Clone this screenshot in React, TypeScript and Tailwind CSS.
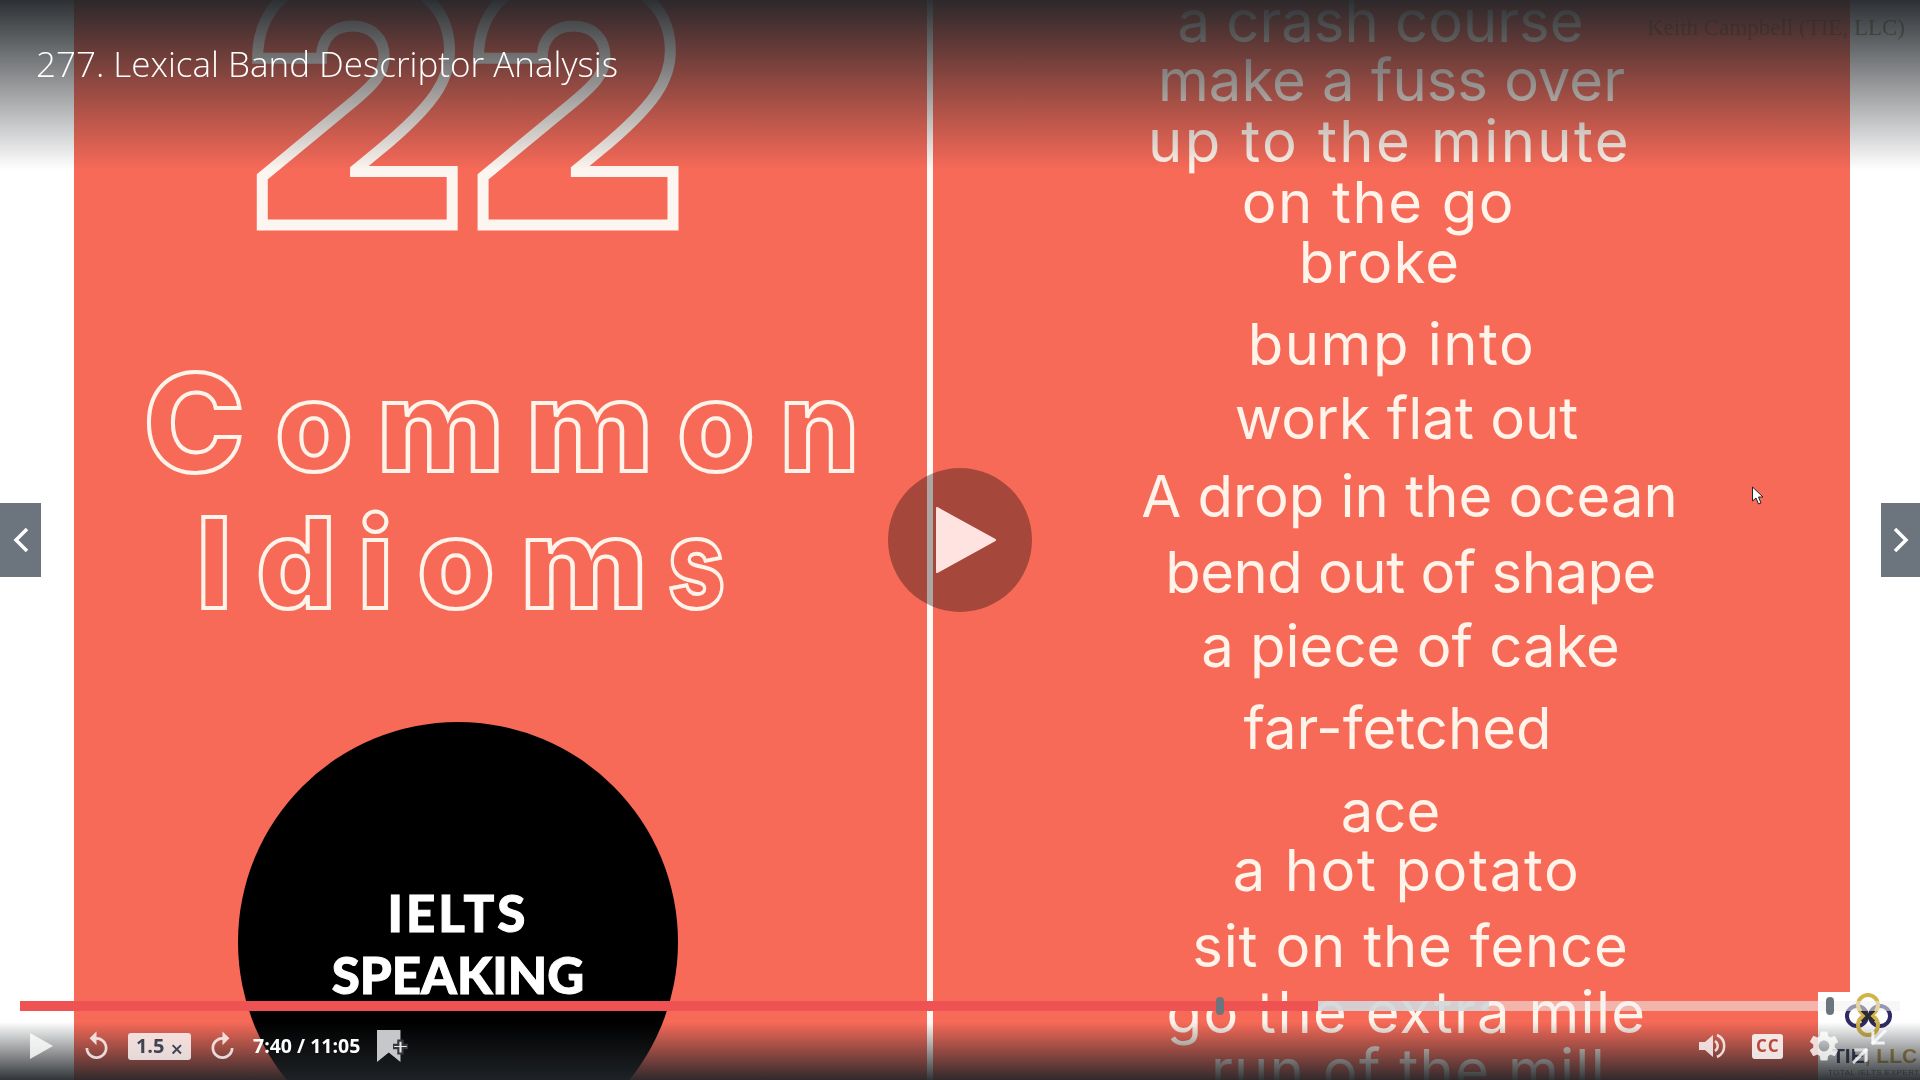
import { Minimize2 } from "lucide-react";
import { MdReplay, MdSettings } from "react-icons/md";

const idioms = [
	{ text: "a crash course", cls: "-mt-[14px] -translate-x-[11px]" },
	{ text: "make a fuss over", cls: "-mt-[11px] translate-x-[0px]" },
	{ text: "up to the minute", cls: "-mt-[9px] -translate-x-[2px] tracking-[2.4px]" },
	{ text: "on the go", cls: "-mt-[9px] -translate-x-[13px] tracking-[1.6px]" },
	{ text: "broke", cls: "-mt-[10px] -translate-x-[12px] tracking-[1.2px]" },
	{ text: "bump into", cls: "mt-[12px] translate-x-[0px] tracking-[1.5px]" },
	{ text: "work flat out", cls: "mt-[4px] translate-x-[15px]" },
	{ text: "A drop in the ocean", cls: "mt-[8px] translate-x-[18px]" },
	{ text: "bend out of shape", cls: "mt-[6px] translate-x-[19px] -tracking-[0.5px]" },
	{ text: "a piece of cake", cls: "mt-[4px] translate-x-[19px]" },
	{ text: "far-fetched", cls: "mt-[12px] translate-x-[6px]" },
	{ text: "ace", cls: "mt-[13px] -translate-x-[1px]" },
	{ text: "a hot potato", cls: "-mt-[11px] translate-x-[15px] tracking-[1.6px]" },
	{ text: "sit on the fence", cls: "mt-[6px] translate-x-[19px] tracking-[0.8px]" },
	{ text: "go the extra mile", cls: "-mt-[4px] translate-x-[15px] tracking-[1.3px]" },
	{ text: "run of the mill", cls: "-mt-[12px] translate-x-[17px] tracking-[1.3px]" },
];

const outlineCls = "font-['Inter',sans-serif] font-extrabold text-[125px] leading-[120px] text-transparent [-webkit-text-stroke:4px_#fff3ea]";

function Letter({ ch, cls }: { ch: string; cls: string }) {
	return <span className={`flex justify-center ${outlineCls} ${cls}`}>{ch}</span>;
}

function LeftSlide() {
	return (
		<div className="w-[853px] shrink-0">
			<div className="-mt-[68px] h-[340px] pl-[172px] whitespace-nowrap font-['Inter',sans-serif] font-black text-[340px] leading-[340px] tracking-[1px] text-transparent [-webkit-text-stroke:11px_#fdf6f0]">
				22
			</div>
			<div className="mt-[94px] h-[120px] pl-[68px] flex gap-[32px]">
				<Letter ch="C" cls="w-[104px] !text-[136px] -mt-[3px]" />
				<Letter ch="o" cls="w-[72px]" />
				<Letter ch="m" cls="w-[117px] scale-x-[1.1]" />
				<Letter ch="m" cls="w-[117px] scale-x-[1.1]" />
				<Letter ch="o" cls="w-[72px]" />
				<Letter ch="n" cls="w-[71px]" />
			</div>
			<div className="mt-[17px] h-[120px] pl-[126px] flex gap-[33px]">
				<Letter ch="I" cls="w-[28px]" />
				<Letter ch="d" cls="w-[70px]" />
				<Letter ch="i" cls="w-[23px]" />
				<Letter ch="o" cls="w-[72px]" />
				<Letter ch="m" cls="w-[118px] scale-x-[1.1]" />
				<Letter ch="s" cls="w-[51px] -ml-[5px] scale-x-[0.8]" />
			</div>
			<div className="mt-[99px] ml-[164px] w-[440px] h-[440px] rounded-full bg-black flex flex-col items-center pt-[160px] font-['Lato',sans-serif] font-black text-[51px] leading-[62px] text-white [-webkit-text-stroke:1px_#fff]">
				<span className="tracking-[3px]">IELTS</span>
				<span>SPEAKING</span>
			</div>
		</div>
	);
}

function RightSlide() {
	return (
		<div className="flex-1 flex flex-col items-center font-['Inter',sans-serif] text-[58px] leading-[70px] text-[#fff3ea]">
			{idioms.map((l) => (
				<span key={l.text} className={`shrink-0 whitespace-nowrap ${l.cls}`}>{l.text}</span>
			))}
		</div>
	);
}

function Logo() {
	return (
		<div className="absolute right-0 bottom-0 w-[102px] h-[88px] bg-white overflow-hidden">
			<svg viewBox="0 0 102 64" className="w-[102px] h-[64px]">
				<g fill="none" strokeWidth="4">
					<circle cx="39" cy="24" r="10" stroke="#2f2a63" />
					<circle cx="62" cy="24" r="10" stroke="#2f2a63" />
					<circle cx="50" cy="13" r="10" stroke="#d2b24a" />
					<circle cx="50" cy="33" r="10" stroke="#d2b24a" />
				</g>
				<path d="M44 18 L56 30 M56 18 L44 30" stroke="#2b2a33" strokeWidth="3.5" />
			</svg>
			<div className="absolute left-[14px] top-[50px] font-['Liberation_Sans',sans-serif] font-bold text-[21px] leading-[28px] whitespace-nowrap">
				<span className="text-[#33395a]">TIE</span>
				<span className="text-[#b89c45]">, LLC</span>
			</div>
			<div className="absolute left-[10px] top-[76px] font-['Liberation_Sans',sans-serif] text-[8px] leading-[10px] tracking-[0.5px] whitespace-nowrap text-[#5a5f70]">
				TOTAL IELTS EXPERTS
			</div>
		</div>
	);
}

function VideoFrame() {
	return (
		<div className="absolute inset-0 blur-[0.5px]">
			<div className="ml-[74px] w-[1776px] h-full bg-[#f76a58] flex overflow-hidden">
				<LeftSlide />
				<div className="w-[6px] h-full shrink-0 bg-[#fff8f4]" />
				<RightSlide />
			</div>
			<div className="absolute right-[15px] top-[14px] font-['Liberation_Serif',serif] text-[23px] leading-[28px] text-[#6d5420]/60 whitespace-nowrap">
				Keith Campbell (TIE, LLC)
			</div>
			<Logo />
			<svg viewBox="0 0 12 20" className="absolute left-[1751px] top-[486px] w-[13px] h-[20px]">
				<path d="M1 1 L1 15 L4.5 12 L7 18 L9.5 17 L7 11 L11.5 11 Z" fill="#fff" stroke="#222" strokeWidth="1" />
			</svg>
		</div>
	);
}

function Progress() {
	return (
		<div className="relative h-[10px] mx-[20px] bg-[#f0f0f0]/55">
			<div className="absolute left-0 top-0 h-full w-[1469px] bg-[#ced4da]/80" />
			<div className="absolute left-0 top-0 h-full w-[1298px] bg-[#ee5253]" />
			<div className="absolute left-[1196px] -top-[4px] w-[8px] h-[18px] rounded-full bg-[#6c757d]" />
			<div className="absolute left-[1806px] -top-[4px] w-[8px] h-[18px] rounded-full bg-[#6c757d]" />
		</div>
	);
}

function Controls() {
	return (
		<div className="h-[69px] flex items-center pt-[1px] text-white/80">
			<svg viewBox="0 0 23 26" className="ml-[30px] w-[23px] h-[26px]">
				<polygon points="0,0 23,13 0,26" fill="currentColor" />
			</svg>
			<MdReplay className="ml-[27px] w-[33px] h-[33px]" />
			<button type="button" className="ml-[15px] w-[63px] h-[27px] rounded-[3px] bg-white/80 flex items-center justify-center gap-[6px] font-['Open_Sans',sans-serif] font-bold text-[20px] text-[#3f4450]">
				1.5
				<span className="text-[22px] leading-[15px] mt-[4px] font-semibold">×</span>
			</button>
			<MdReplay className="ml-[15px] w-[33px] h-[33px] -scale-x-100" />
			<span className="ml-[14px] font-['Open_Sans',sans-serif] font-bold text-[19.5px] text-white whitespace-nowrap">7:40 / 11:05</span>
			<svg viewBox="0 0 30 30" className="ml-[17px] w-[32px] h-[32px]">
				<path d="M0 0 H22 V30 L11 21 L0 30 Z" fill="#c5c7c9" />
				<path d="M19 9 H25 V13 H29 V18 H25 V23 H19 V18 H15 V13 H19 Z" fill="#34373c" />
				<path d="M21 11 H23 V15 H28 V16 H23 V21 H21 V16 H16 V15 H21 Z" fill="#e6e6e6" />
			</svg>
			<svg viewBox="0 0 28 26" fill="none" className="ml-[1290px] w-[28px] h-[26px] shrink-0">
				<path d="M0 9 H6 L14 2 V24 L6 17 H0 Z" fill="currentColor" />
				<path d="M16 8 A6 6 0 0 1 16 18" stroke="currentColor" strokeWidth="2.5" />
				<path d="M18 2 A12 12 0 0 1 18 24" stroke="currentColor" strokeWidth="2.5" />
			</svg>
			<span className="ml-[25px] w-[31px] h-[25px] shrink-0 rounded-[3px] bg-white/85 flex items-center justify-center font-['Open_Sans',sans-serif] font-bold text-[17px] tracking-[1px] text-[#b8483b]">
				CC
			</span>
			<MdSettings className="ml-[23px] w-[36px] h-[36px] shrink-0" />
			<Minimize2 className="ml-[7px] w-[41px] h-[41px] shrink-0" strokeWidth={1.8} strokeLinecap="square" />
		</div>
	);
}

export default function App() {
	return (
		<div className="relative w-[1920px] h-[1080px] overflow-hidden bg-white">
			<VideoFrame />

			<div className="absolute inset-0 flex flex-col justify-between">
				<div className="h-[170px] pl-[36px] pt-[41px] bg-gradient-to-b from-[#212529]/95 to-transparent font-['Open_Sans',sans-serif] font-light text-[35px] leading-[46px] text-white">
					277. Lexical Band Descriptor Analysis
				</div>
				<div className="h-[88px] pt-[9px] bg-[linear-gradient(to_bottom,transparent_30px,rgba(33,37,41,0.93)_100%)]">
					<Progress />
					<Controls />
				</div>
			</div>

			<div className="absolute inset-0 flex items-center justify-between pointer-events-none">
				<div className="w-[41px] h-[74px] bg-[#6c757d] flex items-center justify-center">
					<svg viewBox="0 0 16 26" fill="none" className="w-[16px] h-[26px]">
						<path d="M14 2 L3 13 L14 24" stroke="#fff" strokeWidth="3.5" />
					</svg>
				</div>
				<div className="-ml-[2px] w-[144px] h-[144px] rounded-full bg-black/33 flex items-center justify-center pl-[12px]">
					<svg viewBox="0 0 60 68" className="w-[60px] h-[68px]">
						<path d="M1 2 L59 34 L1 66 Z" fill="#ffe3e0" stroke="#ffe3e0" strokeWidth="2" strokeLinejoin="round" />
					</svg>
				</div>
				<div className="w-[39px] h-[74px] bg-[#6c757d] flex items-center justify-center">
					<svg viewBox="0 0 16 26" fill="none" className="w-[16px] h-[26px]">
						<path d="M2 2 L13 13 L2 24" stroke="#fff" strokeWidth="3.5" />
					</svg>
				</div>
			</div>
		</div>
	);
}
